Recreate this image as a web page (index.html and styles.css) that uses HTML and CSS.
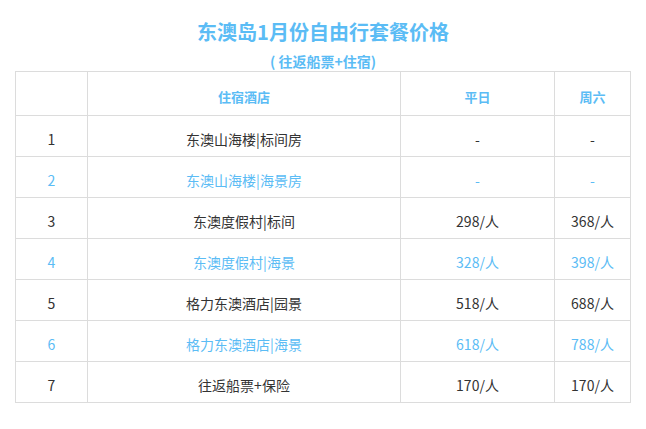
FILE: index.html
```html
<!DOCTYPE html>
<html lang="zh">
<head>
<meta charset="utf-8">
<link rel="stylesheet" href="styles.css">
</head>
<body>
<div class="page">
  <h1 class="title">东澳岛1月份自由行套餐价格</h1>
  <p class="subtitle">( 往返船票+住宿)</p>
  <table class="price">
    <colgroup>
      <col class="c-no"><col class="c-hotel"><col class="c-wd"><col class="c-sat">
    </colgroup>
    <thead>
      <tr><th></th><th>住宿酒店</th><th>平日</th><th>周六</th></tr>
    </thead>
    <tbody>
      <tr><td>1</td><td>东澳山海楼|标间房</td><td>-</td><td>-</td></tr>
      <tr class="alt"><td>2</td><td>东澳山海楼|海景房</td><td>-</td><td>-</td></tr>
      <tr><td>3</td><td>东澳度假村|标间</td><td>298/人</td><td>368/人</td></tr>
      <tr class="alt"><td>4</td><td>东澳度假村|海景</td><td>328/人</td><td>398/人</td></tr>
      <tr><td>5</td><td>格力东澳酒店|园景</td><td>518/人</td><td>688/人</td></tr>
      <tr class="alt"><td>6</td><td>格力东澳酒店|海景</td><td>618/人</td><td>788/人</td></tr>
      <tr><td>7</td><td>往返船票+保险</td><td>170/人</td><td>170/人</td></tr>
    </tbody>
  </table>
</div>
</body>
</html>
```
FILE: styles.css
```css
html, body {
  margin: 0;
  padding: 0;
  background: #ffffff;
}
body {
  font-family: "Noto Sans CJK SC", "Noto Sans", sans-serif;
  color: #333333;
}
.page {
  padding: 20px 15px 0 15px;
}
.title {
  margin: 0;
  font-size: 20px;
  line-height: 24px;
  font-weight: bold;
  color: #5bbcf5;
  text-align: center;
}
.subtitle {
  margin: 8px 0 1px 0;
  font-size: 14px;
  line-height: 18px;
  font-weight: bold;
  color: #5bbcf5;
  text-align: center;
}
.price {
  border-collapse: collapse;
  width: 615px;
  table-layout: fixed;
  font-size: 14px;
}
.c-no { width: 72px; }
.c-hotel { width: 313px; }
.c-wd { width: 154px; }
.c-sat { width: 76px; }
.price th, .price td {
  border: 1px solid #dcdcdc;
  text-align: center;
  padding: 5px 0 0 0;
  box-sizing: border-box;
}
.price th {
  height: 44px;
  font-size: 13px;
  font-weight: bold;
  color: #5bbcf5;
}
.price td {
  height: 41px;
  color: #333333;
}
.price tr.alt td {
  color: #5bbcf5;
}
```
